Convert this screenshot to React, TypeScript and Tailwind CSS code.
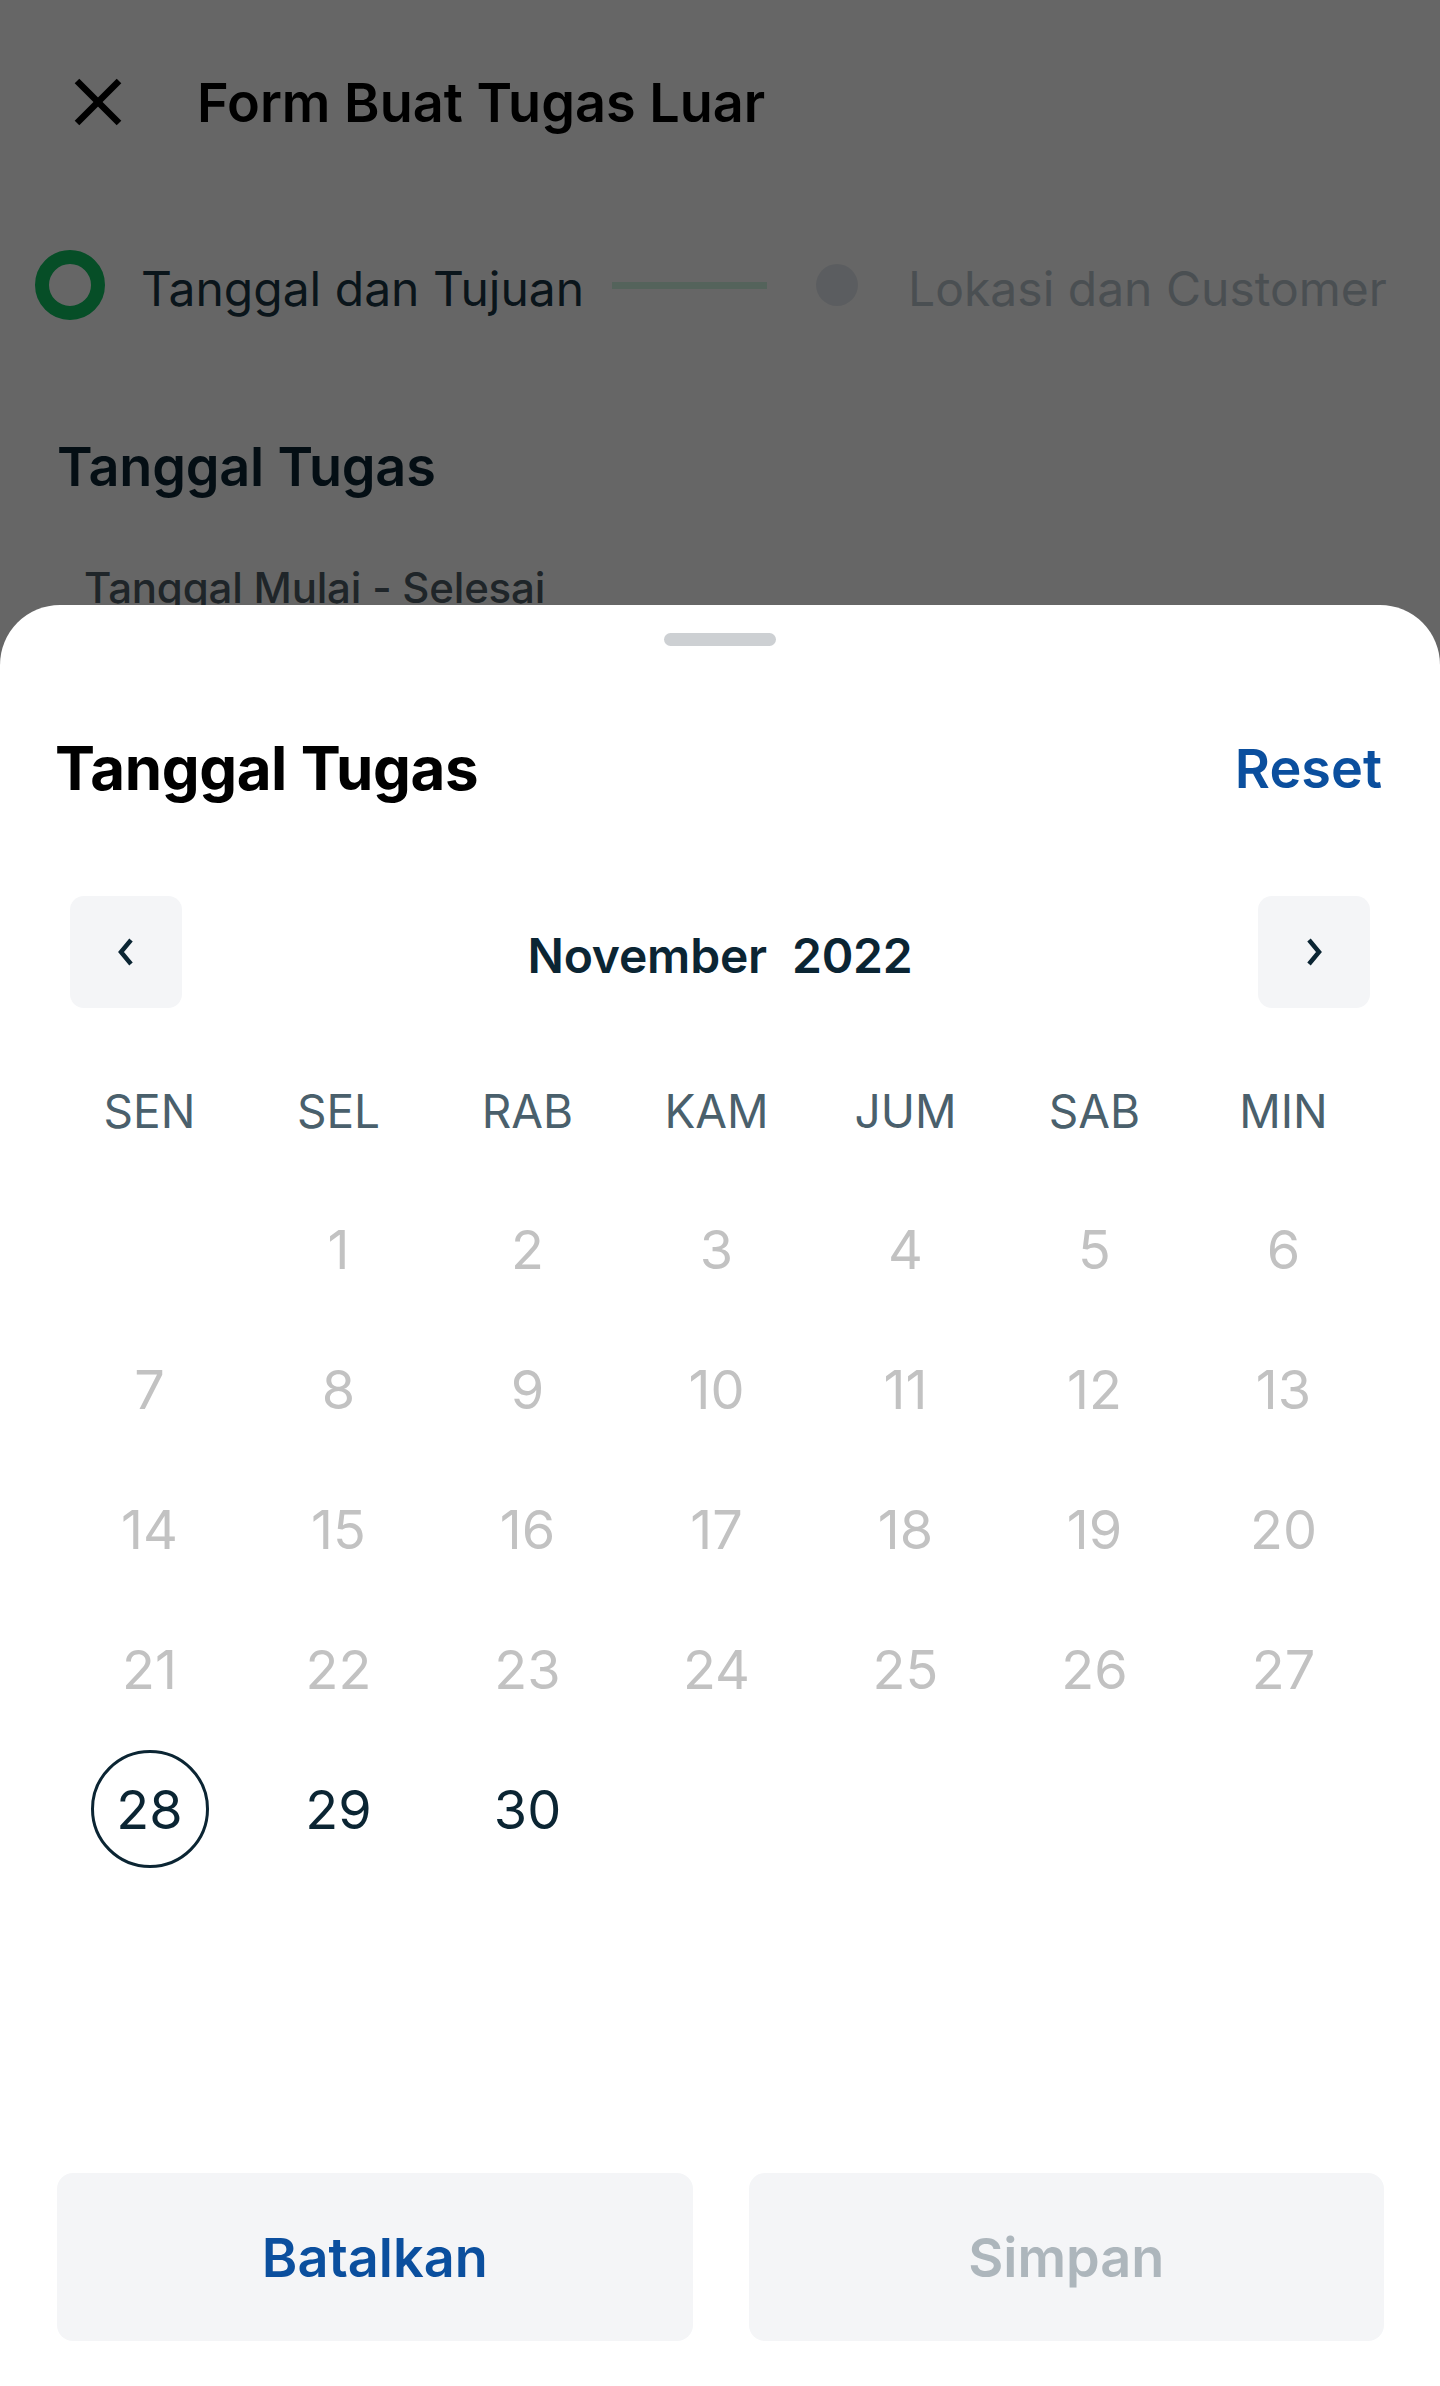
import React from 'react';

const FONT = { fontFamily: 'Inter, "Noto Sans", "Liberation Sans", sans-serif' };

const DAY_NAMES = ['SEN', 'SEL', 'RAB', 'KAM', 'JUM', 'SAB', 'MIN'];

// November 2022 starts on a Tuesday (SEL)
const cells: (number | null)[] = [null, ...Array.from({ length: 30 }, (_, i) => i + 1)];

function Chevron({ dir }: { dir: 'left' | 'right' }) {
    return (
        <svg width="18" height="30" viewBox="0 0 18 30" fill="none">
            <polyline
                points={dir === 'left' ? '14,3 4,15 14,27' : '4,3 14,15 4,27'}
                stroke="#0b2533"
                strokeWidth="4.5"
                strokeLinejoin="miter"
            />
        </svg>
    );
}

export default function App() {
    return (
        <div className="relative w-full h-[2386px] bg-white overflow-hidden" style={FONT}>
            {/* Form page underneath */}
            <div className="flex flex-col">
                <div className="mt-[54px] h-[96px] flex items-center pl-[74px]">
                    <svg width="48" height="48" viewBox="0 0 48 48">
                        <line x1="3" y1="3" x2="45" y2="45" stroke="#000" strokeWidth="6.5" />
                        <line x1="45" y1="3" x2="3" y2="45" stroke="#000" strokeWidth="6.5" />
                    </svg>
                    <h1 className="ml-[75px] text-[54px] font-semibold text-black">Form Buat Tugas Luar</h1>
                </div>

                <div className="mt-[100px] h-[70px] flex items-center pl-[35px]">
                    <div className="w-[70px] h-[70px] rounded-full border-[14px] border-[#0fc262]" />
                    <span className="ml-[36px] pt-[8px] text-[48px] text-[#1a3644]">Tanggal dan Tujuan</span>
                    <div className="ml-[28px] w-[155px] h-[7px] bg-[#d2f7e4]" />
                    <div className="ml-[49px] w-[42px] h-[42px] rounded-full bg-[#e4e9ef]" />
                    <span className="ml-[50px] pt-[8px] text-[48px] text-[#bac5ce]">Lokasi dan Customer</span>
                </div>

                <h2 className="mt-[115px] h-[64px] leading-[64px] pl-[57px] text-[54px] font-semibold text-[#0b2533] tracking-[-0.2px]">Tanggal Tugas</h2>
                <p className="mt-[63px] pl-[84px] text-[42px] leading-[52px] font-medium text-[#4f5e66] tracking-[-0.2px]">Tanggal Mulai - Selesai</p>
            </div>

            {/* Dim overlay */}
            <div className="absolute inset-0 bg-black/60" />

            {/* Bottom sheet */}
            <div className="absolute left-0 right-0 bottom-0 top-[605px] bg-white rounded-t-[60px] flex flex-col">
                <div className="mt-[28px] mx-auto w-[112px] h-[13px] rounded-full bg-[#cdd0d3]" />

                <div className="mt-[86px] h-[72px] flex items-center justify-between pl-[55px] pr-[58px]">
                    <h3 className="text-[60px] font-bold text-black tracking-[-0.4px]">Tanggal Tugas</h3>
                    <button className="text-[54px] font-semibold text-[#0b4f9e]">Reset</button>
                </div>

                <div className="mt-[92px] flex items-center justify-between px-[70px]">
                    <button className="w-[112px] h-[112px] rounded-[14px] bg-[#f4f5f7] flex items-center justify-center">
                        <Chevron dir="left" />
                    </button>
                    <div className="pt-[8px] text-[48px] font-semibold text-[#0b2533] flex tracking-[-0.2px]">
                        <span className="mr-[25px]">November</span>
                        <span>2022</span>
                    </div>
                    <button className="w-[112px] h-[112px] rounded-[14px] bg-[#f4f5f7] flex items-center justify-center">
                        <Chevron dir="right" />
                    </button>
                </div>

                <div className="mt-[73px] ml-[55px] w-[1323px] grid grid-cols-7">
                    {DAY_NAMES.map((d) => (
                        <div key={d} className="h-[60px] flex items-center justify-center text-[46px] text-[#4a606c]">
                            {d}
                        </div>
                    ))}
                </div>

                <div className="mt-[38px] ml-[55px] w-[1323px] grid grid-cols-7">
                    {cells.map((n, i) => (
                        <div key={i} className="h-[140px] flex items-center justify-center">
                            {n === null ? null : n === 28 ? (
                                <div className="w-[118px] h-[118px] rounded-full border-[3.5px] border-[#0b2533] flex items-center justify-center text-[54px] text-[#0b2533]">
                                    {n}
                                </div>
                            ) : (
                                <span className={`text-[54px] ${n > 28 ? 'text-[#0b2533]' : 'text-[#c2c2c2]'}`}>{n}</span>
                            )}
                        </div>
                    ))}
                </div>

                <div className="mt-auto mb-[45px] flex gap-[56px] pl-[57px] pr-[56px]">
                    <button className="flex-1 h-[168px] rounded-[16px] bg-[#f4f5f7] text-[54px] font-semibold text-[#0b4f9e]">
                        Batalkan
                    </button>
                    <button className="flex-1 h-[168px] rounded-[16px] bg-[#f4f5f7] text-[54px] font-semibold text-[#adb6bc]">
                        Simpan
                    </button>
                </div>
            </div>
        </div>
    );
}
